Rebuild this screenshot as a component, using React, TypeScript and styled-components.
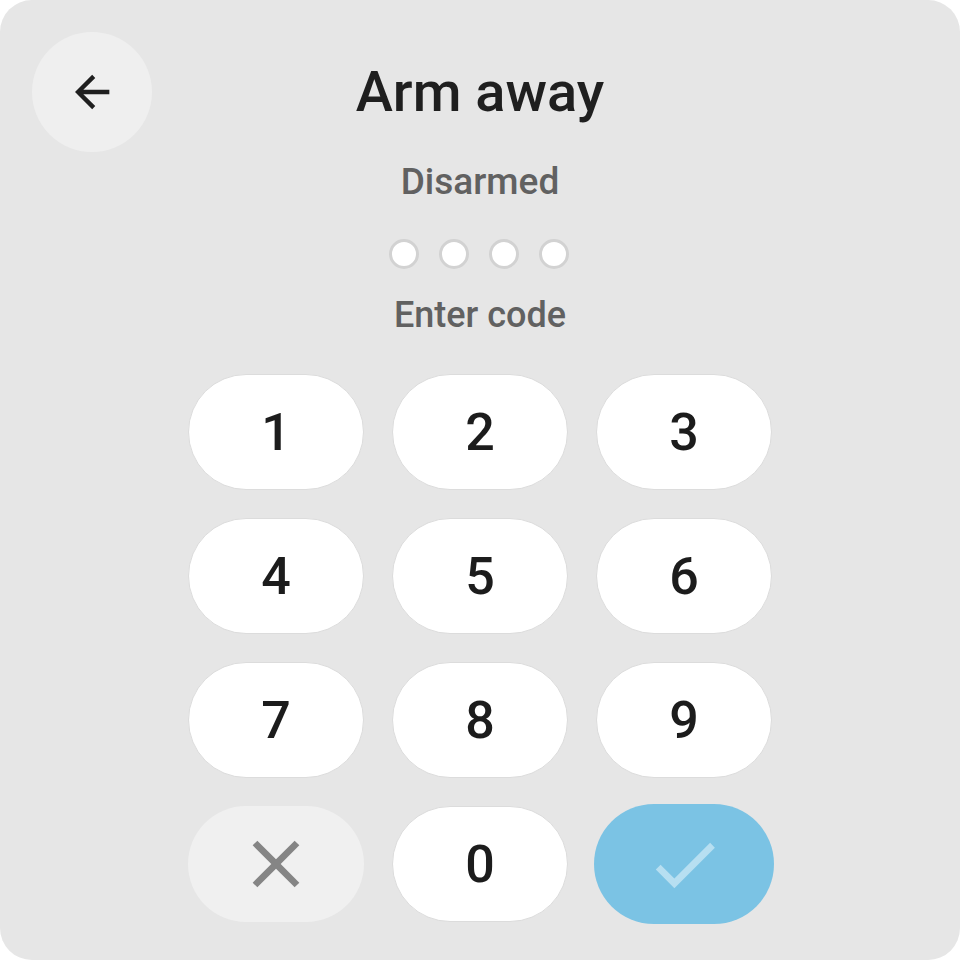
import React, { useState } from "react";
import styled, { createGlobalStyle } from "styled-components";

const Global = createGlobalStyle`
  html, body { margin: 0; padding: 0; background: #ffffff; }
  body { font-family: Roboto, "Noto Sans", Arial, sans-serif; }
  * { box-sizing: border-box; }
`;

const Card = styled.div`
  width: 960px;
  height: 960px;
  background: #e6e6e6;
  border-radius: 32px;
  padding: 32px;
  display: flex;
  flex-direction: column;
  align-items: center;
`;

const Header = styled.div`
  width: 100%;
  display: grid;
  grid-template-columns: 120px 1fr 120px;
  align-items: center;
  height: 120px;
`;

const BackButton = styled.button`
  width: 120px;
  height: 120px;
  border-radius: 50%;
  border: none;
  background: #efefef;
  display: flex;
  align-items: center;
  justify-content: center;
  padding: 0;
  cursor: pointer;
`;

const Title = styled.h1`
  margin: 0;
  text-align: center;
  font-size: 56px;
  font-weight: 500;
  color: #1f1f1f;
  line-height: 64px;
`;

const Label = styled.div<{ $top: number; $size: number }>`
  margin-top: ${(p) => p.$top}px;
  font-size: ${(p) => p.$size}px;
  font-weight: 500;
  line-height: 40px;
  color: #616161;
`;

const Dots = styled.div`
  margin-top: 37px;
  display: flex;
  gap: 20px;
  margin-left: -2px;
`;

const Dot = styled.span<{ $filled: boolean }>`
  width: 30px;
  height: 30px;
  border-radius: 50%;
  border: 3px solid #d2d2d2;
  background: ${(p) => (p.$filled ? "#616161" : "#ffffff")};
`;

const Keypad = styled.div`
  margin-top: 39px;
  display: grid;
  grid-template-columns: repeat(3, 176px);
  grid-auto-rows: 116px;
  gap: 28px;
`;

const Key = styled.button<{ $variant?: "digit" | "clear" | "submit" }>`
  margin: ${(p) => (p.$variant === "submit" ? "-2px" : "0")};
  width: ${(p) => (p.$variant === "submit" ? "calc(100% + 4px)" : "100%")};
  height: ${(p) => (p.$variant === "submit" ? "calc(100% + 4px)" : "100%")};
  border-radius: ${(p) => (p.$variant === "submit" ? "60px" : "58px")};
  border: 1px solid ${(p) => (p.$variant === "digit" ? "#dcdcdc" : "transparent")};
  background: ${(p) =>
    p.$variant === "clear" ? "#f0f0f0" : p.$variant === "submit" ? "#7bc3e4" : "#ffffff"};
  display: flex;
  align-items: center;
  justify-content: center;
  padding: 0;
  font-family: Roboto, Arial, sans-serif;
  font-size: 52px;
  font-weight: 500;
  color: #1c1c1c;
  cursor: pointer;
`;

const ArrowLeft = () => (
  <svg width="52" height="52" viewBox="0 0 24 24">
    <path
      fill="#1f1f1f"
      d="M20,11V13H8L13.5,18.5L12.08,19.92L4.16,12L12.08,4.08L13.5,5.5L8,11H20Z"
    />
  </svg>
);

const CloseIcon = () => (
  <svg width="80" height="80" viewBox="0 0 24 24">
    <path
      fill="#858585"
      d="M19,6.41L17.59,5L12,10.59L6.41,5L5,6.41L10.59,12L5,17.59L6.41,19L12,13.41L17.59,19L19,17.59L13.41,12L19,6.41Z"
    />
  </svg>
);

const CheckIcon = () => (
  <svg width="81" height="81" viewBox="0 0 24 24">
    <path
      fill="#b7dff1"
      d="M21,7L9,19L3.5,13.5L4.91,12.09L9,16.17L19.59,5.59L21,7Z"
    />
  </svg>
);

const digits = ["1", "2", "3", "4", "5", "6", "7", "8", "9"];

export default function App() {
  const [code, setCode] = useState("");
  const press = (d: string) => setCode((c) => (c.length < 4 ? c + d : c));

  return (
    <>
      <Global />
      <Card>
        <Header>
          <BackButton aria-label="Back">
            <ArrowLeft />
          </BackButton>
          <Title>Arm away</Title>
          <span />
        </Header>
        <Label $top={10} $size={37}>
          Disarmed
        </Label>
        <Dots>
          {[0, 1, 2, 3].map((i) => (
            <Dot key={i} $filled={i < code.length} />
          ))}
        </Dots>
        <Label $top={26} $size={36}>
          Enter code
        </Label>
        <Keypad>
          {digits.map((d) => (
            <Key key={d} $variant="digit" onClick={() => press(d)}>
              {d}
            </Key>
          ))}
          <Key $variant="clear" aria-label="Clear" onClick={() => setCode("")}>
            <CloseIcon />
          </Key>
          <Key $variant="digit" onClick={() => press("0")}>
            0
          </Key>
          <Key $variant="submit" aria-label="Submit">
            <CheckIcon />
          </Key>
        </Keypad>
      </Card>
    </>
  );
}
